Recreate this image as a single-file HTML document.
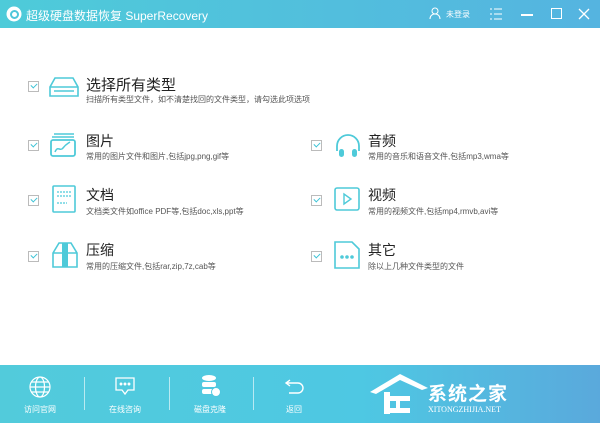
<!DOCTYPE html>
<html><head><meta charset="utf-8"><style>
*{margin:0;padding:0;box-sizing:border-box}
body{width:600px;height:423px;overflow:hidden;background:#fff;font-family:"Liberation Sans","Noto Sans CJK SC",sans-serif;position:relative}
.top{position:absolute;left:0;top:0;width:600px;height:28px;background:linear-gradient(90deg,#4ecbd9,#55b4e0)}
.bot{position:absolute;left:0;top:365px;width:600px;height:58px;background:linear-gradient(90deg,#52cbdb,#4ec8e3 60%,#5aa9dc)}
.t{position:absolute;color:#fff;font-size:12px;white-space:nowrap}
.cb{position:absolute;width:11px;height:11px;border:1px solid #bbb;background:#fff}
.cb:after{content:"";position:absolute;left:2px;top:1px;width:5px;height:3px;border-left:1.5px solid #3cc3d6;border-bottom:1.5px solid #3cc3d6;transform:rotate(-45deg)}
.h{position:absolute;font-size:14px;color:#222;white-space:nowrap}
.s{position:absolute;font-size:8px;color:#555;white-space:nowrap}
.ic{position:absolute}
.bl{position:absolute;color:#fff;font-size:8px;top:404px;width:60px;text-align:center}
.sep{position:absolute;top:377px;width:1px;height:33px;background:rgba(255,255,255,.6)}
</style></head><body>
<div class="top"></div>
<svg class="ic" style="left:6px;top:6px" width="16" height="16" viewBox="0 0 16 16"><circle cx="8" cy="8" r="7.5" fill="#fff"/><circle cx="8.5" cy="8.5" r="3.5" fill="none" stroke="#4ec6da" stroke-width="2"/></svg>
<div class="t" style="left:26px;top:7px;font-size:12px">超级硬盘数据恢复 SuperRecovery</div>
<svg class="ic" style="left:429px;top:7px" width="12" height="13" viewBox="0 0 12 13"><circle cx="6" cy="4" r="3" fill="none" stroke="#fff"/><path d="M1 12c0-3 2-5 5-5s5 2 5 5" fill="none" stroke="#fff"/></svg>
<div class="t" style="left:446px;top:9px;font-size:8px">未登录</div>
<svg class="ic" style="left:490px;top:8px" width="12" height="12"><path d="M0 1h2M4 1h8M0 6h2M4 6h8M0 11h2M4 11h8" stroke="#fff"/></svg>
<div class="ic" style="left:521px;top:14px;width:12px;height:1.5px;background:#fff"></div>
<div class="ic" style="left:551px;top:8px;width:11px;height:11px;border:1.2px solid #fff"></div>
<svg class="ic" style="left:578px;top:8px" width="12" height="12"><path d="M1 1l10 10M11 1L1 11" stroke="#fff" stroke-width="1.3"/></svg>

<div class="cb" style="left:28px;top:81px"></div>
<svg class="ic" style="left:48px;top:76px" width="32" height="22" viewBox="0 0 32 22"><path d="M7 2h18l5 9v9H2v-9z M2 11h28 M6 15h20" fill="none" stroke="#4ecad9" stroke-width="1.6"/></svg>
<div class="h" style="left:86px;top:74px;font-size:15px">选择所有类型</div>
<div class="s" style="left:86px;top:94px">扫描所有类型文件，如不清楚找回的文件类型，请勾选此项选项</div>

<div class="cb" style="left:28px;top:140px"></div>
<svg class="ic" style="left:49px;top:132px" width="28" height="26" viewBox="0 0 28 26"><path d="M5 2h20M3 5h22" stroke="#4ecad9" stroke-width="1.6"/><rect x="2" y="8" width="24" height="16" rx="2" fill="none" stroke="#4ecad9" stroke-width="1.8"/><path d="M6 20c3-7 5 0 8-4s4-4 7-6" fill="none" stroke="#4ecad9" stroke-width="1.5"/></svg>
<div class="h" style="left:86px;top:131px">图片</div>
<div class="s" style="left:86px;top:151px">常用的图片文件和图片,包括jpg,png,gif等</div>

<div class="cb" style="left:28px;top:195px"></div>
<svg class="ic" style="left:52px;top:185px" width="24" height="28" viewBox="0 0 24 28"><rect x="1" y="1" width="22" height="26" rx="1" fill="none" stroke="#4ecad9" stroke-width="1.6"/><path d="M5 7h14M5 11h14M5 18h10" stroke="#4ecad9" stroke-width="1.3" stroke-dasharray="2 1"/></svg>
<div class="h" style="left:86px;top:185px">文档</div>
<div class="s" style="left:86px;top:206px">文档类文件如office PDF等,包括doc,xls,ppt等</div>

<div class="cb" style="left:28px;top:251px"></div>
<svg class="ic" style="left:51px;top:241px" width="28" height="28" viewBox="0 0 28 28"><path d="M2 12L8 2h12l6 10v14H2z M2 12h24" fill="none" stroke="#4ecad9" stroke-width="1.6"/><rect x="11" y="2" width="6" height="24" fill="#4ecad9"/></svg>
<div class="h" style="left:86px;top:240px">压缩</div>
<div class="s" style="left:86px;top:261px">常用的压缩文件,包括rar,zip,7z,cab等</div>

<div class="cb" style="left:311px;top:140px"></div>
<svg class="ic" style="left:334px;top:133px" width="28" height="26" viewBox="0 0 28 26"><path d="M3 18V13a11 11 0 0 1 22 0v5" fill="none" stroke="#4ecad9" stroke-width="1.8"/><rect x="5" y="16" width="5" height="8" rx="2.5" fill="#4ecad9"/><rect x="18" y="16" width="5" height="8" rx="2.5" fill="#4ecad9"/></svg>
<div class="h" style="left:368px;top:131px">音频</div>
<div class="s" style="left:368px;top:151px">常用的音乐和语音文件,包括mp3,wma等</div>

<div class="cb" style="left:311px;top:195px"></div>
<svg class="ic" style="left:334px;top:187px" width="26" height="24" viewBox="0 0 26 24"><rect x="1" y="1" width="24" height="22" rx="2" fill="none" stroke="#4ecad9" stroke-width="1.6"/><path d="M10 7v10l7-5z" fill="none" stroke="#4ecad9" stroke-width="1.4"/></svg>
<div class="h" style="left:368px;top:185px">视频</div>
<div class="s" style="left:368px;top:206px">常用的视频文件,包括mp4,rmvb,avi等</div>

<div class="cb" style="left:311px;top:251px"></div>
<svg class="ic" style="left:334px;top:241px" width="26" height="28" viewBox="0 0 26 28"><path d="M1 1h17l7 7v19H1z" fill="none" stroke="#4ecad9" stroke-width="1.6"/><circle cx="8" cy="16" r="1.8" fill="#4ecad9"/><circle cx="13" cy="16" r="1.8" fill="#4ecad9"/><circle cx="18" cy="16" r="1.8" fill="#4ecad9"/></svg>
<div class="h" style="left:368px;top:240px">其它</div>
<div class="s" style="left:368px;top:261px">除以上几种文件类型的文件</div>

<div class="bot"></div>
<svg class="ic" style="left:29px;top:376px" width="22" height="22" viewBox="0 0 22 22" fill="none" stroke="#fff" stroke-width="1.2"><circle cx="11" cy="11" r="10"/><ellipse cx="11" cy="11" rx="4.5" ry="10"/><path d="M1 11h20M2.5 6h17M2.5 16h17"/></svg>
<div class="bl" style="left:10px">访问官网</div>
<div class="sep" style="left:84px"></div>
<svg class="ic" style="left:114px;top:376px" width="22" height="22" viewBox="0 0 22 22" fill="none" stroke="#fff" stroke-width="1.3"><path d="M2 2h18v12h-6l-3 4-3-4H2z"/><circle cx="7" cy="8" r=".8" fill="#fff"/><circle cx="11" cy="8" r=".8" fill="#fff"/><circle cx="15" cy="8" r=".8" fill="#fff"/></svg>
<div class="bl" style="left:95px">在线咨询</div>
<div class="sep" style="left:169px"></div>
<svg class="ic" style="left:200px;top:374px" width="22" height="24" viewBox="0 0 22 24" fill="#fff"><ellipse cx="9" cy="4" rx="7" ry="3"/><rect x="2" y="8" width="14" height="5" rx="2"/><rect x="2" y="15" width="12" height="5" rx="2"/><circle cx="16" cy="18" r="4.5" fill="#fff" stroke="#4ec8e0"/></svg>
<div class="bl" style="left:180px">磁盘克隆</div>
<div class="sep" style="left:253px"></div>
<svg class="ic" style="left:284px;top:378px" width="22" height="18" viewBox="0 0 22 18" fill="none" stroke="#fff" stroke-width="1.4"><path d="M6 2L2 5l4 3M2 5h12a5 5 0 0 1 0 10H5"/></svg>
<div class="bl" style="left:264px">返回</div>
<svg class="ic" style="left:370px;top:372px" width="58" height="44" viewBox="0 0 58 44" fill="#fff"><path d="M0 20L30 2l28 14-6 2-22-10L6 22z"/><rect x="14" y="20" width="6" height="22"/><rect x="14" y="24" width="26" height="5"/><rect x="14" y="36" width="26" height="5"/><rect x="26" y="24" width="4" height="17"/></svg>
<div class="t" style="left:428px;top:379px;font-size:19px;font-weight:bold;letter-spacing:1px">系统之家</div>
<div class="t" style="left:428px;top:405px;font-size:8px;font-family:'Liberation Serif',serif">XITONGZHIJIA.NET</div>
</body></html>
